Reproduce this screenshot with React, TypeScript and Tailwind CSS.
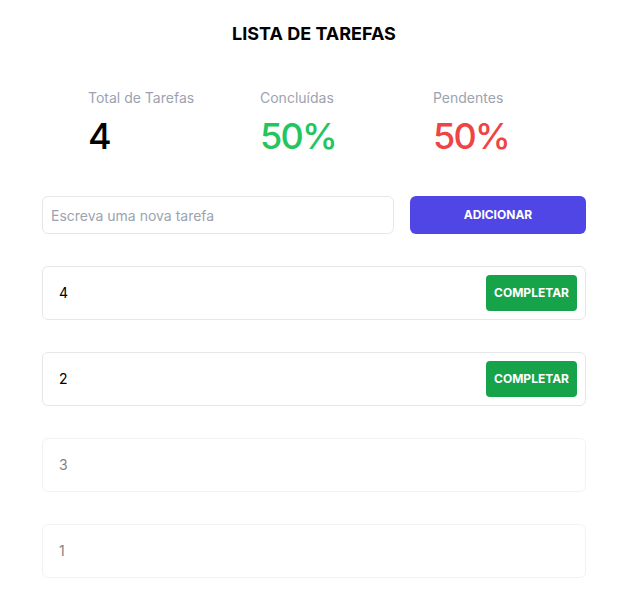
import React from 'react';

const tasks = [
  { id: 4, text: '4', done: false },
  { id: 2, text: '2', done: false },
  { id: 3, text: '3', done: true },
  { id: 1, text: '1', done: true },
];

const App = () => {
  return (
    <div className="min-h-screen bg-white font-['Inter',sans-serif] pt-5 pb-10">
      <div className="w-[544px] ml-[42px]">
        {/* Title */}
        <h1 className="text-center text-lg font-bold text-black leading-7">LISTA DE TAREFAS</h1>

        {/* Stats */}
        <div className="grid grid-cols-[172px_173px_auto] pl-[46px] mt-10">
          <div>
            <p className="text-sm text-[#9ca3af]">Total de Tarefas</p>
            <p className="mt-2 text-4xl font-medium tracking-tighter text-black">4</p>
          </div>
          <div>
            <p className="text-sm text-[#9ca3af]">Concluídas</p>
            <p className="mt-2 text-4xl font-medium tracking-tighter text-[#22c55e]">50%</p>
          </div>
          <div>
            <p className="text-sm text-[#9ca3af]">Pendentes</p>
            <p className="mt-2 text-4xl font-medium tracking-tighter text-[#ef4444]">50%</p>
          </div>
        </div>

        {/* New task */}
        <div className="flex gap-4 mt-10">
          <input
            type="text"
            placeholder="Escreva uma nova tarefa"
            className="w-[352px] min-w-0 h-[38px] px-2 rounded-md border border-[#e5e7eb] text-sm placeholder:text-[#9ca3af] focus:outline-none"
          />
          <button className="flex-1 h-[38px] rounded-md bg-[#4f46e5] text-white text-xs font-bold">
            ADICIONAR
          </button>
        </div>

        {/* Task list */}
        <div className="flex flex-col gap-8 mt-8">
          {tasks.map((task) => (
            <div
              key={task.id}
              className={`flex items-center justify-between h-[54px] p-2 rounded-md border border-[#e5e7eb] ${task.done ? 'opacity-50' : ''}`}
            >
              <span className="px-2 text-sm text-black">{task.text}</span>
              {!task.done && (
                <button className="h-9 px-2 rounded bg-[#16a34a] text-white text-xs font-bold">
                  COMPLETAR
                </button>
              )}
            </div>
          ))}
        </div>
      </div>
    </div>
  );
};

export default App;
